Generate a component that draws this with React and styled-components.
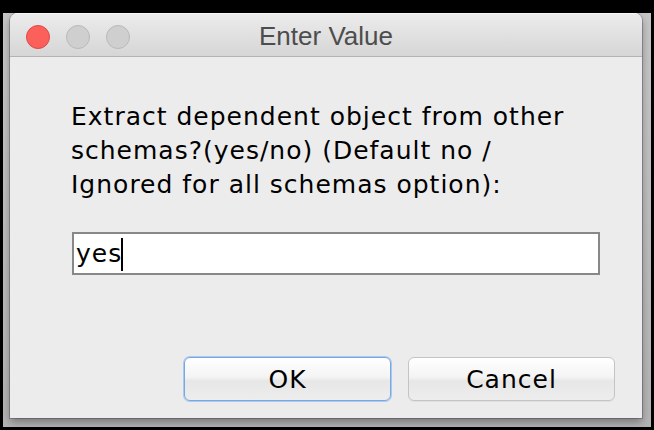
import React from "react";
import styled, { createGlobalStyle } from "styled-components";

const Global = createGlobalStyle`
  html, body {
    margin: 0;
    padding: 0;
    background: #000;
    width: 654px;
    height: 430px;
    overflow: hidden;
  }
  * { box-sizing: border-box; }
`;

const Stage = styled.div`
  width: 654px;
  height: 430px;
  padding: 13px 3px 3px 3px;
  display: flex;
  background: #000;
`;

const Frame = styled.div`
  flex: 1;
  display: flex;
  padding: 0 9px 9px 7px;
  background: linear-gradient(to bottom, #c6c6c6, #b4b4b4);
`;

const Window = styled.div`
  flex: 1;
  display: flex;
  flex-direction: column;
  background: #ececec;
  border-radius: 8px 8px 0 0;
  overflow: hidden;
  box-shadow: 0 0 0 1px rgba(0, 0, 0, 0.22), 0 4px 8px rgba(0, 0, 0, 0.35);
`;

const TitleBar = styled.div`
  height: 44px;
  flex: none;
  padding-top: 4px;
  display: grid;
  grid-template-columns: 1fr auto 1fr;
  align-items: center;
  background: linear-gradient(to bottom, #ececec, #d6d6d6);
  border-bottom: 1px solid #b3b3b3;
  box-shadow: inset 0 1px 0 #f7f7f7;
`;

const Lights = styled.div`
  display: flex;
  gap: 16px;
  padding-left: 16px;
`;

const Light = styled.span`
  width: 24px;
  height: 24px;
  border-radius: 50%;
  background: ${(p) => (p.$color === "red" ? "#fc605b" : "#cfcfcf")};
  border: 1px solid ${(p) => (p.$color === "red" ? "#de4945" : "#b9b9b9")};
`;

const Title = styled.div`
  font-family: "Liberation Sans", Arial, sans-serif;
  font-size: 26px;
  color: #4d4d4d;
  text-align: center;
`;

const Content = styled.div`
  padding: 43px 42px 0 62px;
  display: flex;
  flex-direction: column;
`;

const Prompt = styled.div`
  font-family: "DejaVu Sans", sans-serif;
  font-size: 25px;
  letter-spacing: 1px;
  line-height: 34px;
  color: #000;
  margin-left: -1px;
`;

const TextField = styled.div`
  margin-top: 30px;
  height: 43px;
  border: 2px solid #888888;
  background: #fff;
  padding-left: 2px;
  display: flex;
  align-items: center;
  font-family: "DejaVu Sans", sans-serif;
  font-size: 25px;
  letter-spacing: 1px;
  color: #000;
`;

const Caret = styled.span`
  display: inline-block;
  width: 2px;
  height: 33px;
  background: #000;
  margin-left: -1px;
  margin-top: 2px;
`;

const ButtonRow = styled.div`
  margin-top: auto;
  display: flex;
  justify-content: flex-end;
  gap: 17px;
  padding: 0 27px 17px 0;
`;

const Button = styled.button`
  width: 207px;
  height: 44px;
  border-radius: 6px;
  border: 1px solid ${(p) => (p.$focused ? "#79a7df" : "#c4c4c4")};
  box-shadow: ${(p) =>
    p.$focused ? "0 0 0 1px #a9c9ef" : "0 1px 0 rgba(0,0,0,0.05)"};
  background: linear-gradient(
    to bottom,
    #ffffff 0%,
    #f4f4f4 45%,
    #e7e7e7 55%,
    #ededed 100%
  );
  font-family: "DejaVu Sans", sans-serif;
  font-size: 25px;
  letter-spacing: 1px;
  color: #000;
  padding: 0;
  display: flex;
  align-items: center;
  justify-content: center;
`;

export default function App() {
  return (
    <>
      <Global />
      <Stage>
        <Frame>
          <Window>
            <TitleBar>
              <Lights>
                <Light $color="red" />
                <Light />
                <Light />
              </Lights>
              <Title>Enter Value</Title>
              <div />
            </TitleBar>
            <Content>
              <Prompt>
                Extract dependent object from other
                <br />
                schemas?(yes/no) (Default no /
                <br />
                Ignored for all schemas option):
              </Prompt>
              <TextField>
                yes
                <Caret />
              </TextField>
            </Content>
            <ButtonRow>
              <Button $focused>OK</Button>
              <Button>Cancel</Button>
            </ButtonRow>
          </Window>
        </Frame>
      </Stage>
    </>
  );
}
